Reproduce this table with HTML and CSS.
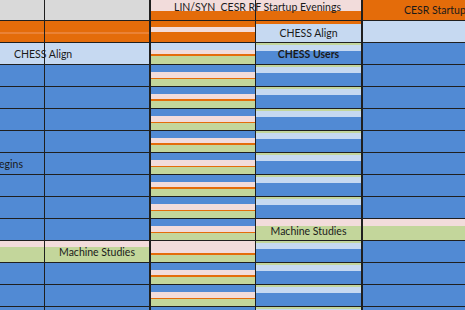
FILE: index.html
```html
<!DOCTYPE html>
<html>
<head>
<meta charset="utf-8">
<link rel="stylesheet" href="styles.css">
</head>
<body>
<div class="sheet">
  <!-- header -->
  <div class="cell gray"></div>
  <div class="cell gray"></div>
  <div class="cell col-c c-hdr over"><span class="hdr-text">LIN/SYN&nbsp; CESR RF Startup Evenings</span></div>
  <div class="cell d-hdr"></div>
  <div class="cell col-e orange e-hdr"><span>CESR Startup</span></div>
  <!-- r1 -->
  <div class="cell orange-band"></div>
  <div class="cell orange-band"></div>
  <div class="cell col-c c-r1"></div>
  <div class="cell d-r1 center pad-top"><span>CHESS Align</span></div>
  <div class="cell col-e lblue"></div>
  <!-- r2 -->
  <div class="cell lblue over a-text"><span>CHESS Align</span></div>
  <div class="cell lblue"></div>
  <div class="cell col-c c-r2"></div>
  <div class="cell d-std center bold"><span>CHESS Users</span></div>
  <div class="cell col-e blue"></div>
  <!-- r3 -->
  <div class="cell blue"></div>
  <div class="cell blue"></div>
  <div class="cell col-c c-std"></div>
  <div class="cell d-std"></div>
  <div class="cell col-e blue"></div>
  <!-- r4 -->
  <div class="cell blue"></div>
  <div class="cell blue"></div>
  <div class="cell col-c c-std"></div>
  <div class="cell d-std"></div>
  <div class="cell col-e blue"></div>
  <!-- r5 -->
  <div class="cell blue"></div>
  <div class="cell blue"></div>
  <div class="cell col-c c-std"></div>
  <div class="cell d-std"></div>
  <div class="cell col-e blue"></div>
  <!-- r6 -->
  <div class="cell blue"></div>
  <div class="cell blue"></div>
  <div class="cell col-c c-std"></div>
  <div class="cell d-std"></div>
  <div class="cell col-e blue"></div>
  <!-- r7 -->
  <div class="cell blue clip"><span class="cut">egins</span></div>
  <div class="cell blue"></div>
  <div class="cell col-c c-std"></div>
  <div class="cell d-std"></div>
  <div class="cell col-e blue"></div>
  <!-- r8 -->
  <div class="cell blue"></div>
  <div class="cell blue"></div>
  <div class="cell col-c c-std"></div>
  <div class="cell d-std"></div>
  <div class="cell col-e blue"></div>
  <!-- r9 -->
  <div class="cell blue"></div>
  <div class="cell blue"></div>
  <div class="cell col-c c-std"></div>
  <div class="cell d-std"></div>
  <div class="cell col-e blue"></div>
  <!-- r10 -->
  <div class="cell blue"></div>
  <div class="cell blue"></div>
  <div class="cell col-c c-std"></div>
  <div class="cell d-pg center pad-top"><span>Machine Studies</span></div>
  <div class="cell col-e pg"></div>
  <!-- r11 -->
  <div class="cell pg"></div>
  <div class="cell pg center"><span>Machine Studies</span></div>
  <div class="cell col-c c-r11"></div>
  <div class="cell d-std"></div>
  <div class="cell col-e blue"></div>
  <!-- r12 -->
  <div class="cell blue"></div>
  <div class="cell blue"></div>
  <div class="cell col-c c-std"></div>
  <div class="cell d-std"></div>
  <div class="cell col-e blue"></div>
  <!-- r13 -->
  <div class="cell blue"></div>
  <div class="cell blue"></div>
  <div class="cell col-c c-std"></div>
  <div class="cell d-std"></div>
  <div class="cell col-e blue"></div>
  <!-- r14 -->
  <div class="cell blue"></div>
  <div class="cell blue"></div>
  <div class="cell col-c c-std"></div>
  <div class="cell d-std"></div>
  <div class="cell col-e blue"></div>
</div>
</body>
</html>
```

FILE: styles.css
```css
* { box-sizing: border-box; }

html, body {
  margin: 0;
  padding: 0;
}

body {
  width: 465px;
  height: 310px;
  overflow: hidden;
  background: #1f1f1f;
  font-family: Lato, "Liberation Sans", sans-serif;
  font-size: 10.5px;
  color: #1a1a1a;
}

.sheet {
  --gray: #d9d9d9;
  --orange: #e46c0a;
  --lblue: #c6d9f1;
  --blue: #518ad4;
  --pink: #f2dcdb;
  --green: #c3d69b;
  --line: #1f1f1f;
  display: grid;
  grid-template-columns: 44px 104px 105px 105px 103px;
  grid-template-rows: 20px repeat(13, 21px) 3px;
  column-gap: 1px;
  row-gap: 1px;
  background: var(--line);
}

.cell {
  display: flex;
  align-items: center;
  min-width: 0;
  min-height: 0;
  white-space: nowrap;
  line-height: 12px;
}

.col-c, .col-e { border-left: 1px solid var(--line); }

.gray { background: var(--gray); }
.orange { background: var(--orange); }
.lblue { background: var(--lblue); }
.blue { background: var(--blue); }

.orange-band {
  background: linear-gradient(var(--orange) 0 11px, #ea8236 11px 13px, var(--orange) 13px);
}

.pg { background: linear-gradient(var(--pink) 0 6.5px, var(--green) 6.5px); }
.d-pg { background: linear-gradient(var(--pink) 0 7px, var(--green) 7px); }

.c-hdr, .d-hdr {
  background: linear-gradient(var(--pink) 0 11px, var(--orange) 11px);
}
.c-r1 {
  background: linear-gradient(var(--orange) 0 6px, var(--pink) 6px 11px, var(--orange) 11px);
}
.c-r2 {
  background: linear-gradient(var(--lblue) 0 7px, var(--pink) 7px 11px, var(--orange) 11px 13px, var(--green) 13px);
}
.c-std {
  background: linear-gradient(var(--blue) 0 7px, var(--pink) 7px 12.5px, var(--orange) 12.5px 14px, var(--green) 14px);
}
.c-r11 {
  background: linear-gradient(var(--pink) 0 12px, var(--orange) 12px 14px, var(--green) 14px);
}
.d-std {
  background: linear-gradient(var(--green) 0 2px, var(--lblue) 2px 8px, var(--blue) 8px);
}
.d-r1 {
  background: linear-gradient(var(--orange) 0 3px, var(--lblue) 3px);
}

.over { z-index: 1; }

.c-hdr {
  align-items: flex-start;
  padding: 1px 0 0 23px;
}

.e-hdr { padding-left: 41px; overflow: hidden; }

.a-text { padding-left: 14px; }

.clip { overflow: hidden; }
.cut { margin-left: -1px; }

.center { justify-content: center; }
.pad-top { padding-top: 2px; }
.bold { font-weight: 700; }
```
